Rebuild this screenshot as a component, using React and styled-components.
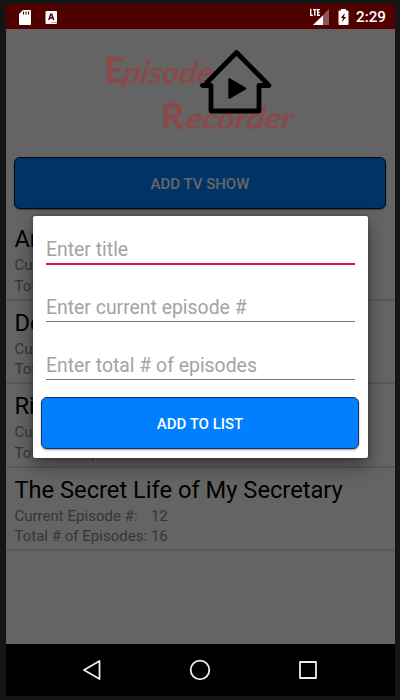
import React from "react";
import styled, { createGlobalStyle } from "styled-components";

const GlobalStyle = createGlobalStyle`
  * { box-sizing: border-box; }
  body { margin: 0; background: #151515; font-family: Roboto, sans-serif; }
`;

const Frame = styled.div`
  width: 400px;
  height: 700px;
  padding: 4px 5px 4px 6px;
  background: #151515;
  overflow: hidden;
`;

const Screen = styled.div`
  height: 692px;
  display: flex;
  flex-direction: column;
`;

const StatusBar = styled.header`
  height: 25px;
  flex: none;
  display: flex;
  align-items: center;
  padding: 0 9px 0 12px;
  background: #510000;
  color: #fff;
`;

const StatusIcons = styled.div`
  display: flex;
  flex: 1;
  gap: 12.5px;
`;

const StatusRight = styled.div`
  display: flex;
  align-items: center;
  gap: 7.5px;
`;

const Clock = styled.span`
  font-size: 15.2px;
  font-weight: 500;
  line-height: 24px;
  padding-top: 1px;
`;

const Content = styled.main`
  position: relative;
  height: 615px;
  flex: none;
  background: #fafafa;
  overflow: hidden;
`;

const Logo = styled.svg`
  display: block;
  position: relative;
  z-index: 1;
  width: 389px;
  height: 128px;
`;

const LogoText = styled.text`
  font-family: Lato, sans-serif;
  font-size: ${(p) => (p.$cap ? 36 : 30)}px;
  font-weight: ${(p) => (p.$cap ? 900 : 700)};
  font-style: ${(p) => (p.$cap ? "normal" : "italic")};
  fill: #8a4a4a;
`;

const Button = styled.button`
  display: block;
  width: ${(p) => p.$width}px;
  height: 52px;
  padding: 2px 0 0;
  margin: ${(p) => p.$margin};
  border: 1px solid ${(p) => p.$edge};
  border-radius: 6px;
  background: #007fff;
  color: #fff;
  font: 500 15px Roboto, sans-serif;
  box-shadow: 0 1px 2px rgba(0, 0, 0, 0.4);
`;

const ShowList = styled.ul`
  margin: 8px 0 0;
  padding: 0;
  list-style: none;
`;

const ShowRow = styled.li`
  height: 83.6px;
  padding: 7px 9px 0 8.4px;
  border-bottom: 2px solid #dcdcdc;
`;

const ShowTitle = styled.h2`
  margin: 0;
  font-size: 23.7px;
  line-height: 31px;
  font-weight: 400;
  color: #000;
  white-space: nowrap;
`;

const Stat = styled.div`
  display: grid;
  grid-template-columns: 136.5px auto;
  font-size: 15.05px;
  line-height: 20.5px;
  color: #888;
  white-space: nowrap;
`;

const Scrim = styled.div`
  position: absolute;
  inset: 0;
  background: rgba(0, 0, 0, 0.6);
`;

const Dialog = styled.form`
  position: absolute;
  left: 27px;
  top: 186.5px;
  width: 335px;
  height: 242.5px;
  padding: 11.5px 13px 0;
  border-radius: 2px;
  background: #fff;
  box-shadow: 0 8px 18px rgba(0, 0, 0, 0.42), 0 0 4px rgba(0, 0, 0, 0.25);
`;

const Field = styled.input`
  display: block;
  width: 309px;
  height: ${(p) => (p.$active ? 38 : 37)}px;
  margin: 0 0 ${(p) => (p.$active ? 20 : 21)}px;
  padding: 8px 0 0;
  border: 0;
  border-bottom: ${(p) => (p.$active ? "2px solid #d8144a" : "1px solid #777")};
  border-radius: 0;
  background: transparent;
  font: 400 19.4px Roboto, sans-serif;
  outline: 0;
  &::placeholder { color: #a3a3a3; opacity: 1; }
`;

const NavBar = styled.nav`
  height: 52px;
  display: flex;
  justify-content: center;
  align-items: center;
  gap: 84px;
  padding-right: 2px;
  background: #000;
`;

const shows = [
  ["An", 4, 16],
  ["De", 8, 16],
  ["Ri", 6, 16],
  ["The Secret Life of My Secretary", 12, 16],
];

export default function App() {
  return (
    <>
      <GlobalStyle />
      <Frame>
        <Screen>
          <StatusBar>
            <StatusIcons>
              <svg width="14" height="16" viewBox="0 0 14 16">
                <path d="M5 1h7q1 0 1 1v13q0 1-1 1H2q-1 0-1-1V5z" fill="#fff" />
                <path d="M5.5 2.5v3M8 2.5v3M10.5 2.5v3" stroke="#510000" strokeWidth="1.1" />
              </svg>
              <svg width="13" height="16" viewBox="0 0 13 16">
                <rect x="0.5" y="2" width="11.5" height="13" rx="1" fill="#fff" />
                <path d="M3.8 11 5.7 5.2h1L8.7 11M4.5 9h3.4" fill="none" stroke="#510000" strokeWidth="1.4" />
                <path d="M6.5 13.5h1m1 0h1m1 0h1" stroke="#510000" strokeWidth="0.8" />
              </svg>
            </StatusIcons>
            <StatusRight>
              <svg width="21" height="18" viewBox="0 0 21 18">
                <path d="M20 1v16H4z" fill="#8b5656" />
                <path d="M14 7.4V17H4z" fill="#fff" />
                <path d="M1.7 .8v6.4h2.1M4 1.6h3.6M5.8 1.6v6.2M11 1.6H8.7v5.6H11M8.7 4.4h2" fill="none" stroke="#fff" strokeWidth="1.4" />
              </svg>
              <svg width="11" height="17" viewBox="0 0 11 17">
                <path d="M3 1h5v1.5h1.5q1 0 1 1V16q0 1-1 1h-8q-1 0-1-1V3.5q0-1 1-1H3z" fill="#fff" />
                <path d="M6.8 5 2.8 10h2.1l-.8 4 4.1-5.1H6z" fill="#510000" />
              </svg>
              <Clock>2:29</Clock>
            </StatusRight>
          </StatusBar>

          <Content>
            <Logo viewBox="6 29 389 128">
              <LogoText $cap x="104" y="83" textLength="19">E</LogoText>
              <LogoText transform="translate(122 83) skewX(-9)" textLength="90" lengthAdjust="spacingAndGlyphs">pisode</LogoText>
              <LogoText $cap x="161" y="128.5" textLength="22">R</LogoText>
              <LogoText transform="translate(185 128.5) skewX(-9)" textLength="107" lengthAdjust="spacingAndGlyphs">ecorder</LogoText>
              <g fill="none" stroke="#000" strokeWidth="4.8" strokeLinecap="round" strokeLinejoin="round">
                <path d="M202.5 85.5h8.5v25.5h48V85.5h10L236.5 52.5 207 82.5" />
              </g>
              <path d="M229.5 79.5v18L245 88.5z" stroke="#000" strokeWidth="2.5" strokeLinejoin="round" />
            </Logo>
            <Button $width={372} $margin="0 8px" $edge="#001a35">ADD TV SHOW</Button>
            <ShowList>
              {shows.map(([title, current, total]) => (
                <ShowRow key={title}>
                  <ShowTitle>{title}</ShowTitle>
                  <Stat><span>Current Episode #:</span><span>{current}</span></Stat>
                  <Stat><span>Total # of Episodes:</span><span>{total}</span></Stat>
                </ShowRow>
              ))}
            </ShowList>
            <Scrim />
            <Dialog>
              <Field $active placeholder="Enter title" />
              <Field placeholder="Enter current episode #" />
              <Field placeholder="Enter total # of episodes" />
              <Button type="button" $width={318} $margin="-4px 0 0 -5px" $edge="#16345c">ADD TO LIST</Button>
            </Dialog>
          </Content>

          <NavBar>
            <svg width="24" height="24" viewBox="0 0 24 24" fill="none" stroke="#eee" strokeWidth="1.8" strokeLinejoin="round">
              <path d="M19.5 3v18L4 12z" />
            </svg>
            <svg width="24" height="24" viewBox="0 0 24 24" fill="none" stroke="#eee" strokeWidth="1.8">
              <circle cx="12" cy="12" r="9.3" />
            </svg>
            <svg width="24" height="24" viewBox="0 0 24 24" fill="none" stroke="#eee" strokeWidth="1.8" strokeLinejoin="round">
              <rect x="4" y="4" width="16" height="16" />
            </svg>
          </NavBar>
        </Screen>
      </Frame>
    </>
  );
}
